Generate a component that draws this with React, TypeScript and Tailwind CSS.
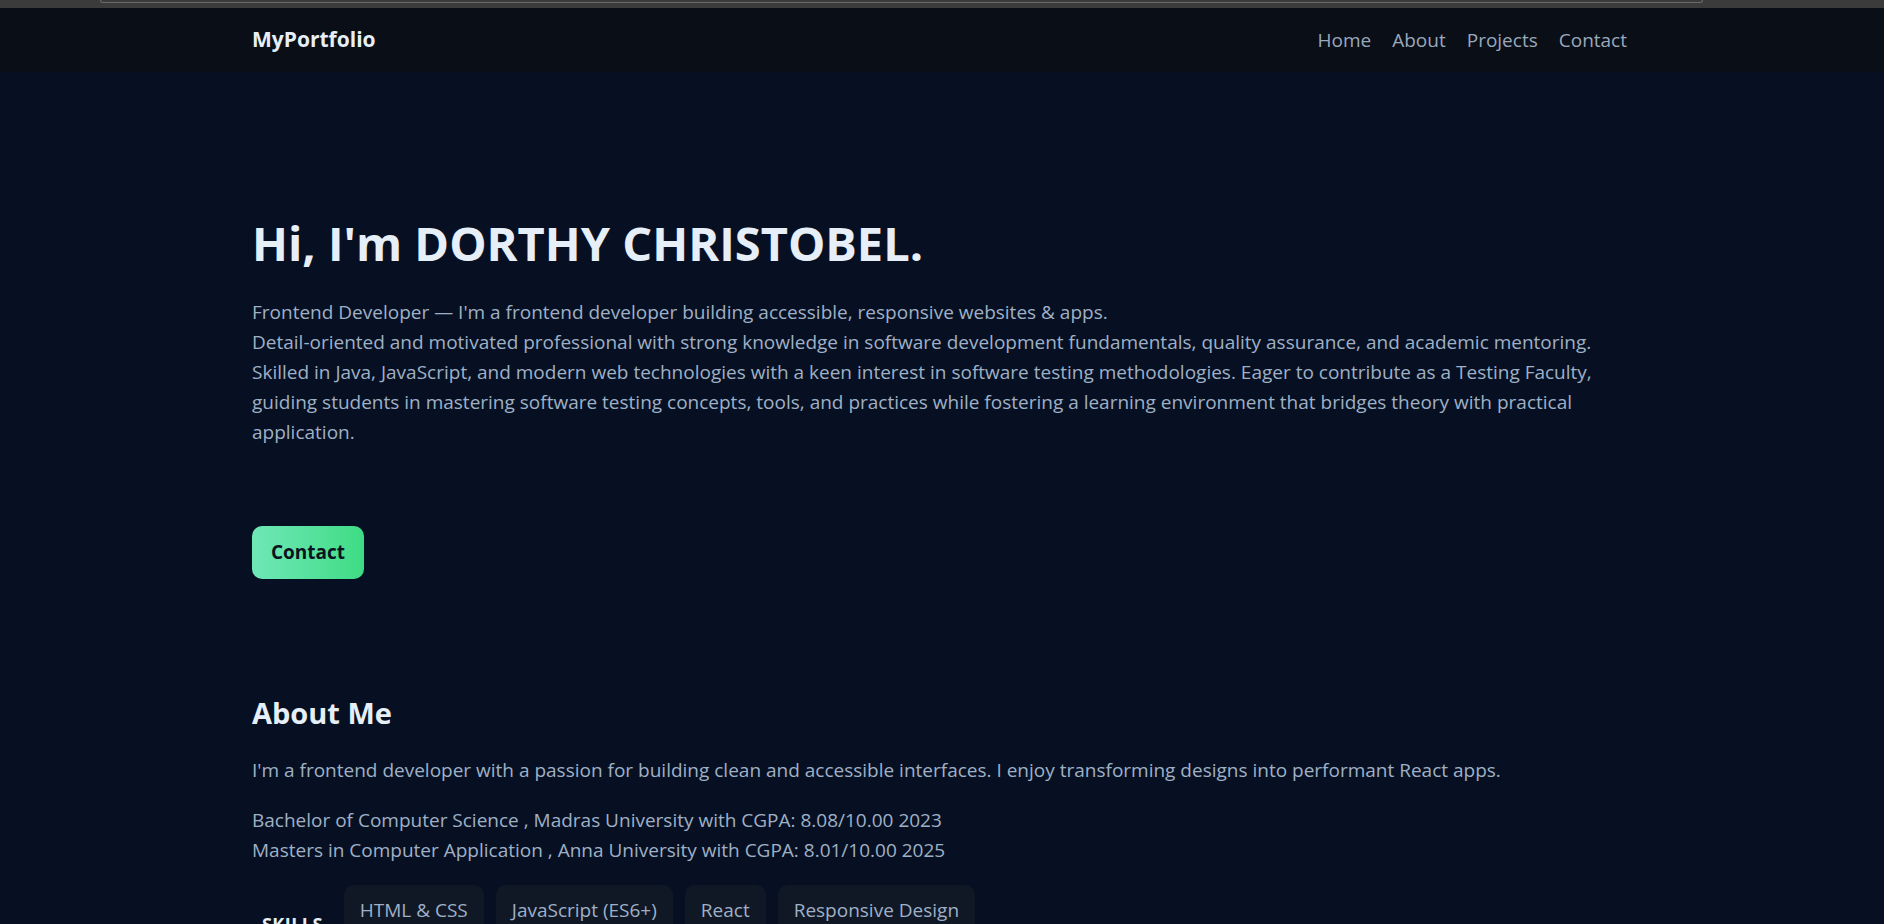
import { useState } from "react";

const skills = ["HTML & CSS", "JavaScript (ES6+)", "React", "Responsive Design"];
const navLinks = ["Home", "About", "Projects", "Contact"];

function NavBar() {
  return (
    <header className="bg-[#0a0e17]">
      <div className="mx-auto flex h-16 w-[1380px] items-center justify-between pr-[5px]">
        <a href="#" className="text-[21px] font-bold text-[#e6eef8]">
          MyPortfolio
        </a>
        <nav className="flex items-center gap-[21px]">
          {navLinks.map((link) => (
            <a key={link} href={`#${link.toLowerCase()}`} className="text-[19px] text-[#9aa8bc] hover:text-white">
              {link}
            </a>
          ))}
        </nav>
      </div>
    </header>
  );
}

export default function App() {
  const [sent] = useState(false);

  return (
    <div
      className="min-h-screen bg-[#071022] text-[#9fb0c6]"
      style={{ fontFamily: '"Open Sans", "Liberation Sans", sans-serif' }}
    >
      {/* browser strip */}
      <div className="h-2 bg-[#3b3b3b] pr-[181px] pl-[100px]">
        <div className="h-[3px] rounded-b-md border-x border-b border-[#6a6a6a]" />
      </div>
      <NavBar />

      <main className="mx-auto w-[1380px]">
        <section id="home" className="pt-[142px]">
          <h1 className="text-[47px] leading-tight font-bold text-[#e6eef8]">Hi, I'm DORTHY CHRISTOBEL.</h1>
          <p className="mt-[24px] text-[19px] leading-[30px]">
            Frontend Developer — I'm a frontend developer building accessible, responsive websites &amp; apps.
            <br />
            Detail-oriented and motivated professional with strong knowledge in software development fundamentals,
            quality assurance, and academic mentoring. Skilled in Java, JavaScript, and modern web technologies with a
            keen interest in software testing methodologies. Eager to contribute as a Testing Faculty, guiding students
            in mastering software testing concepts, tools, and practices while fostering a learning environment that
            bridges theory with practical application.
          </p>
          <a
            href="#contact"
            className="mt-[79px] inline-flex h-[53px] items-center rounded-[10px] bg-gradient-to-r from-[#6ee7b7] to-[#3ddc84] px-[19px] text-[19px] font-bold text-[#0b1220]"
          >
            {sent ? "Sent" : "Contact"}
          </a>
        </section>

        <section id="about" className="pt-[112px]">
          <h2 className="text-[29px] font-bold text-[#e6eef8]">About Me</h2>
          <p className="mt-[21px] text-[19px] leading-[30px]">
            I'm a frontend developer with a passion for building clean and accessible interfaces. I enjoy transforming
            designs into performant React apps.
          </p>
          <p className="mt-[20px] text-[19px] leading-[30px]">
            Bachelor of Computer Science , Madras University with CGPA: 8.08/10.00 2023
            <br />
            Masters in Computer Application , Anna University with CGPA: 8.01/10.00 2025
          </p>

          <div className="mt-[20px] flex items-start gap-[21px] pb-20">
            <h3 className="pt-[26px] pl-[10px] text-[18px] font-bold tracking-wide text-[#e6eef8] uppercase">Skills</h3>
            <ul className="flex flex-wrap gap-[12px]">
              {skills.map((skill) => (
                <li key={skill} className="rounded-[10px] bg-[#101826] px-[16px] py-[11px] text-[19px] leading-[28px] text-[#9fb0c6]">
                  {skill}
                </li>
              ))}
            </ul>
          </div>
        </section>
      </main>
    </div>
  );
}
